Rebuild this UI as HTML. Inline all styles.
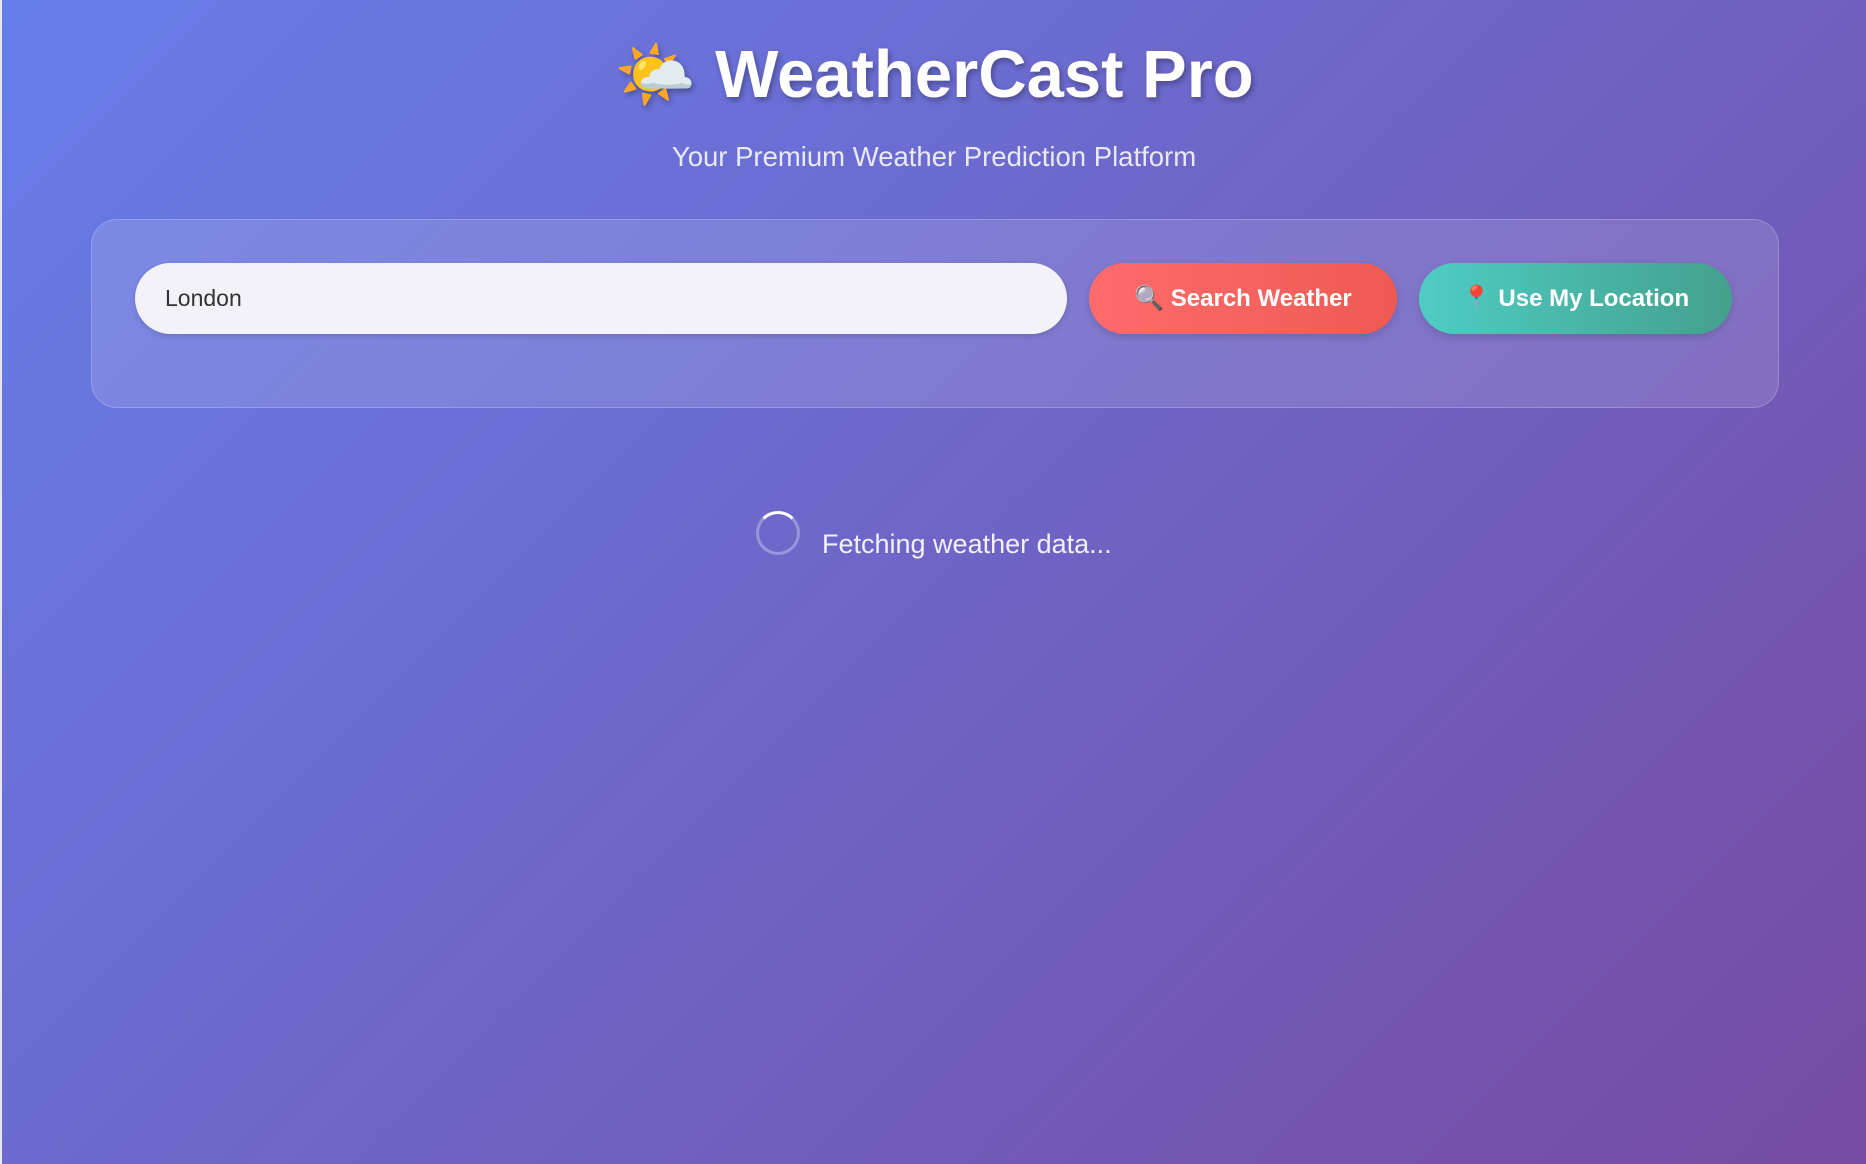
<!DOCTYPE html>
<html><head><meta charset="utf-8"><style>
html,body{margin:0;padding:0;width:1866px;height:1164px;overflow:hidden}
body{background:linear-gradient(135deg,#667eea 0%,#764ba2 100%);font-family:"Liberation Sans","DejaVu Sans",sans-serif;position:relative;border-left:2px solid #e8e8f0;box-sizing:border-box}
h1{position:absolute;left:0;right:0;top:36px;margin:0;text-align:center;color:#fff;font-size:67px;font-weight:bold;text-shadow:2px 3px 6px rgba(0,0,0,.3)}
.sub{position:absolute;left:0;right:0;top:141px;text-align:center;color:rgba(255,255,255,.85);font-size:27.5px}
.card{position:absolute;left:89px;top:219px;width:1688px;height:189px;box-sizing:border-box;border-radius:26px;background:rgba(255,255,255,.13);border:1px solid rgba(255,255,255,.2)}
.inp{position:absolute;left:133px;top:263px;width:932px;height:71px;border-radius:36px;background:#f3f2f9;box-shadow:0 2px 6px rgba(0,0,0,.15);color:#333;font-size:23px;line-height:71px;padding-left:30px;box-sizing:border-box}
.btn{position:absolute;top:263px;height:71px;border-radius:36px;color:#fff;font-weight:bold;font-size:24px;line-height:71px;text-align:center;box-shadow:0 3px 8px rgba(0,0,0,.15)}
.b1{left:1087px;width:308px;background:linear-gradient(90deg,#ff6b6b,#ee5a52)}
.b2{left:1417px;width:313px;background:linear-gradient(90deg,#4ecdc4,#44a08d)}
.spin{position:absolute;left:754px;top:511px;width:38px;height:38px;border-radius:50%;border:3px solid rgba(255,255,255,.3);border-top-color:#fff}
.load{position:absolute;left:820px;top:529px;color:rgba(255,255,255,.9);font-size:27px}
</style></head><body>
<h1><span style="font-size:66px">🌤️</span> WeatherCast Pro</h1>
<div class="sub">Your Premium Weather Prediction Platform</div>
<div class="card"></div>
<div class="inp">London</div>
<div class="btn b1">🔍 Search Weather</div>
<div class="btn b2">📍 Use My Location</div>
<div class="spin"></div>
<div class="load">Fetching weather data...</div>
</body></html>
